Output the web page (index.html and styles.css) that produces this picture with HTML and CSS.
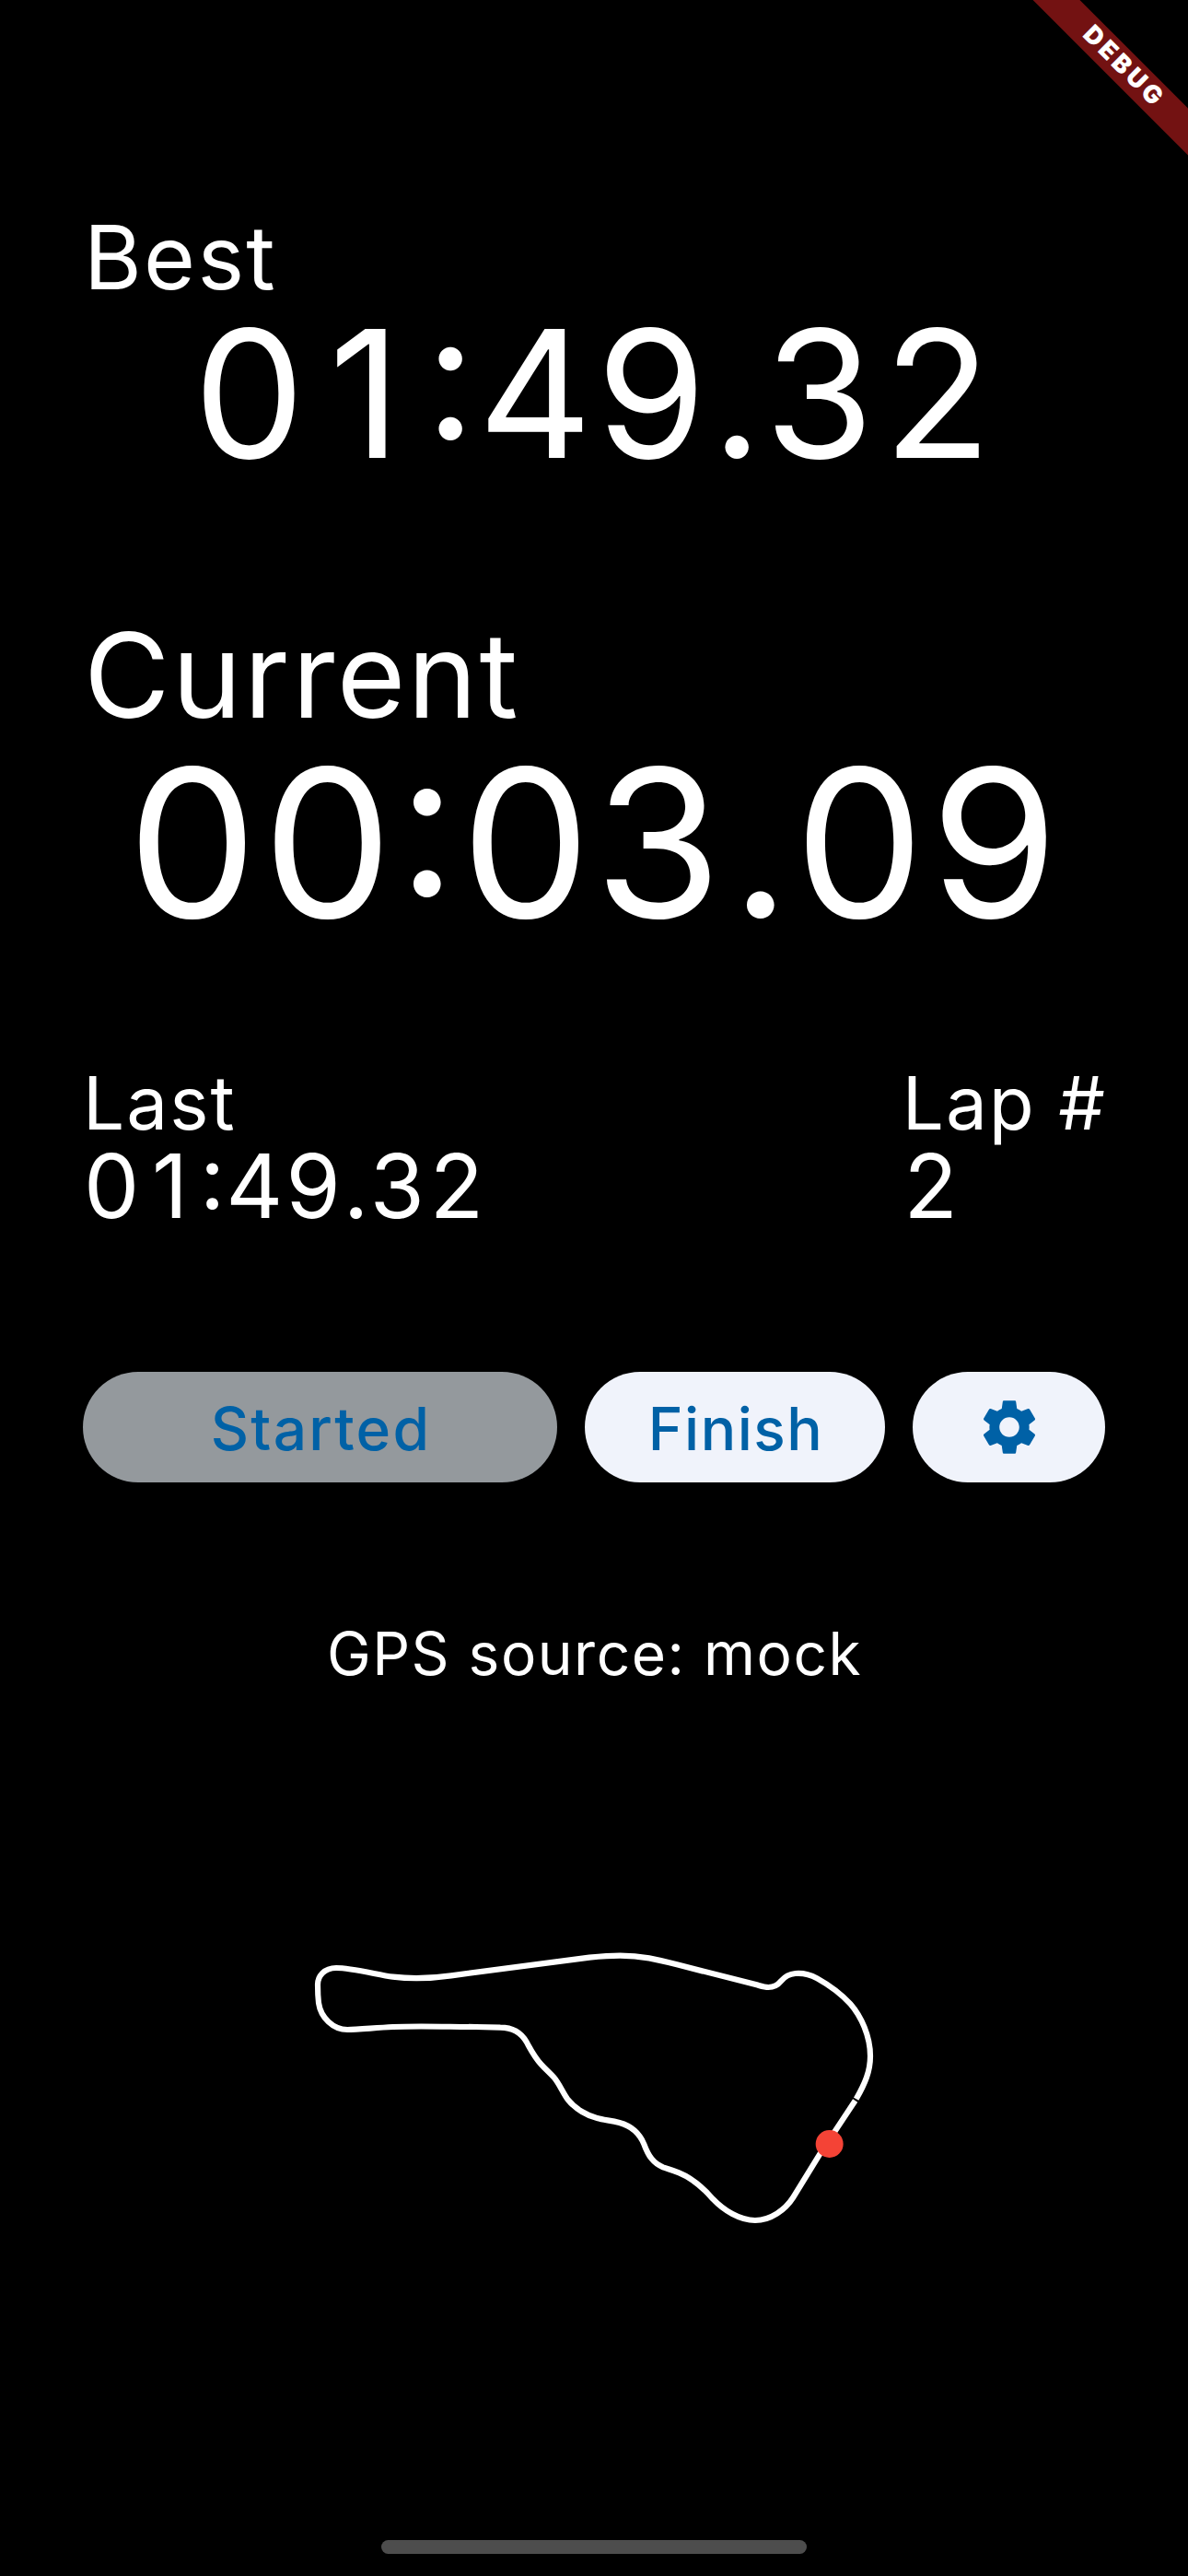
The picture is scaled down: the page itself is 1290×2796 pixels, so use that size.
FILE: index.html
```html
<!DOCTYPE html>
<html lang="en">
<head>
<meta charset="utf-8">
<title>Lap timer</title>
<link rel="stylesheet" href="styles.css">
</head>
<body>
<main class="screen">
  <div class="banner">DEBUG</div>

  <section class="best">
    <h2 class="label label-best">Best</h2>
    <div class="time time-best">0<span class="one">1</span><span class="sep colon">:</span>49<span class="sep">.</span>32</div>
  </section>

  <section class="current">
    <h1 class="label label-current">Current</h1>
    <div class="time time-current">00<span class="sep colon">:</span>03<span class="sep">.</span>09</div>
  </section>

  <section class="stats">
    <div class="stat">
      <h3 class="label label-stat">Last</h3>
      <div class="time time-stat">0<span class="one">1</span><span class="sep colon">:</span>49<span class="sep">.</span>32</div>
    </div>
    <div class="stat">
      <h3 class="label label-stat">Lap #</h3>
      <div class="time time-stat">2</div>
    </div>
  </section>

  <section class="actions">
    <button class="btn btn-started" disabled>Started</button>
    <button class="btn btn-finish">Finish</button>
    <button class="btn btn-settings" aria-label="Settings">
      <svg class="gear" viewBox="0 0 24 24"><path d="M19.14 12.94c.04-.3.06-.61.06-.94 0-.32-.02-.64-.07-.94l2.03-1.58c.18-.14.23-.41.12-.61l-1.92-3.32c-.12-.22-.37-.29-.59-.22l-2.39.96c-.5-.38-1.03-.7-1.62-.94l-.36-2.54c-.04-.24-.24-.41-.48-.41h-3.84c-.24 0-.43.17-.47.41l-.36 2.54c-.59.24-1.13.57-1.62.94l-2.39-.96c-.22-.08-.47 0-.59.22L2.74 8.87c-.12.21-.08.47.12.61l2.03 1.58c-.05.3-.09.63-.09.94s.02.64.07.94l-2.03 1.58c-.18.14-.23.41-.12.61l1.92 3.32c.12.22.37.29.59.22l2.39-.96c.5.38 1.03.7 1.62.94l.36 2.54c.05.24.24.41.48.41h3.84c.24 0 .44-.17.47-.41l.36-2.54c.59-.24 1.13-.56 1.62-.94l2.39.96c.22.08.47 0 .59-.22l1.92-3.32c.12-.22.07-.47-.12-.61l-2.01-1.58zM12 15.6c-1.98 0-3.6-1.62-3.6-3.6s1.62-3.6 3.6-3.6 3.6 1.62 3.6 3.6-1.62 3.6-3.6 3.6z"/></svg>
    </button>
  </section>

  <p class="source">GPS source: mock</p>

  <svg class="track" viewBox="0 0 1890 990">
    <path class="line" d="M1799 535C1828 484 1845 445 1845 395C1845 330 1815 265 1780 225C1748 190 1715 166 1672 142C1644 127 1622 124 1601 126C1578 128 1565 138 1555 150C1542 166 1530 171 1513 171C1500 171 1486 166 1475 163L1215 97C1150 80 1100 68 1030 68C990 68 960 71 930 74L480 133C410 143 340 143 290 137C240 130 155 108 105 108C66 108 45 135 45 162C45 190 46 205 48 222C55 270 95 309 142 309C175 309 230 303 290 300C370 296 480 300 560 300L640 302C684 302 710 323 725 349C738 372 750 397 772 421C787 438 802 450 815 465C832 485 842 512 860 537C885 568 925 590 955 597C978 604 1000 604 1028 612C1065 622 1094 648 1108 682C1122 720 1138 744 1170 757C1187 763 1200 766 1222 775C1266 793 1299 822 1332 860C1368 898 1420 930 1470 930C1520 930 1568 896 1594 855L1680 715L1796 540"/>
    <circle class="car" cx="1712" cy="681" r="45"/>
  </svg>

  <div class="home-bar"></div>
</main>
</body>
</html>
```

FILE: styles.css
```css
* { box-sizing: border-box; }

body {
  margin: 0;
  background: #000;
  color: #fff;
  font-family: Inter, "Noto Sans", sans-serif;
}

.screen {
  position: relative;
  display: flex;
  flex-direction: column;
  width: 1290px;
  height: 2796px;
  padding: 231px 90px 24px;
  overflow: hidden;
}

.banner {
  position: absolute;
  left: 1068.5px;
  top: 54px;
  width: 300px;
  height: 36px;
  padding: 0 0 3px 3px;
  background: #731212;
  font-size: 27px;
  font-weight: 900;
  line-height: 33px;
  letter-spacing: 3.8px;
  text-align: center;
  transform: rotate(45deg);
}

.label {
  margin: 0;
  font-weight: 400;
  line-height: 1;
  letter-spacing: 2px;
}

.label-best { padding-left: 1px; font-size: 96px; letter-spacing: 2.3px; }
.label-current { padding-left: 1px; font-size: 128px; letter-spacing: 2.3px; }
.label-stat { font-size: 80px; }

.time {
  line-height: 1;
  letter-spacing: 1.4px;
  font-variant-numeric: tabular-nums;
}

.sep { padding: 0 0.016em; }

/* The colon sits level with the middle of the digits. */
.colon { line-height: 0; vertical-align: 0.102em; }

/* A plain, footless 1 that still fills a full digit cell. */
.one {
  display: inline-block;
  width: 0.656em;
  text-align: center;
  font-variant-numeric: normal;
}

.time-best { margin-top: 4px; font-size: 192px; text-align: center; }
.time-current { margin-top: 6px; font-size: 224px; text-align: center; }
.time-stat { margin-top: 2px; font-size: 96px; }
.time-stat .sep { padding: 0 0.008em; }

.best { height: 292px; }
.current { height: 358px; margin-top: 146px; }

.stats {
  display: flex;
  justify-content: space-between;
  height: 178px;
  margin: 130px -2px 0 0;
}

.actions {
  display: grid;
  grid-template-columns: 515px 326px 209px;
  gap: 30px;
  margin-top: 153.67px;
}

.btn {
  display: flex;
  align-items: center;
  justify-content: center;
  height: 120px;
  padding: 4px 0 0 2px;
  border: 0;
  border-radius: 60px;
  background: #f0f3fb;
  color: #0061a6;
  font: 500 64px/1 Inter, "Noto Sans", sans-serif;
}

.btn-started { background: #94999d; letter-spacing: 2.2px; }
.btn-finish { letter-spacing: 1.5px; }
.btn-settings { padding: 0; }

.gear { width: 72px; height: 72px; fill: currentColor; }

.source {
  margin: 154px 0 0;
  font-size: 64px;
  line-height: 1;
  letter-spacing: 1.5px;
  text-align: center;
  text-indent: 1px;
}

.track {
  width: 630px;
  height: 330px;
  margin: 273.33px 0 0 240px;
}

.line { fill: none; stroke: #fff; stroke-width: 18.5; }
.car { fill: #f44336; }

.home-bar {
  align-self: center;
  width: 462px;
  height: 15px;
  margin-top: auto;
  border-radius: 7.5px;
  background: #4d4d4d;
}
```
